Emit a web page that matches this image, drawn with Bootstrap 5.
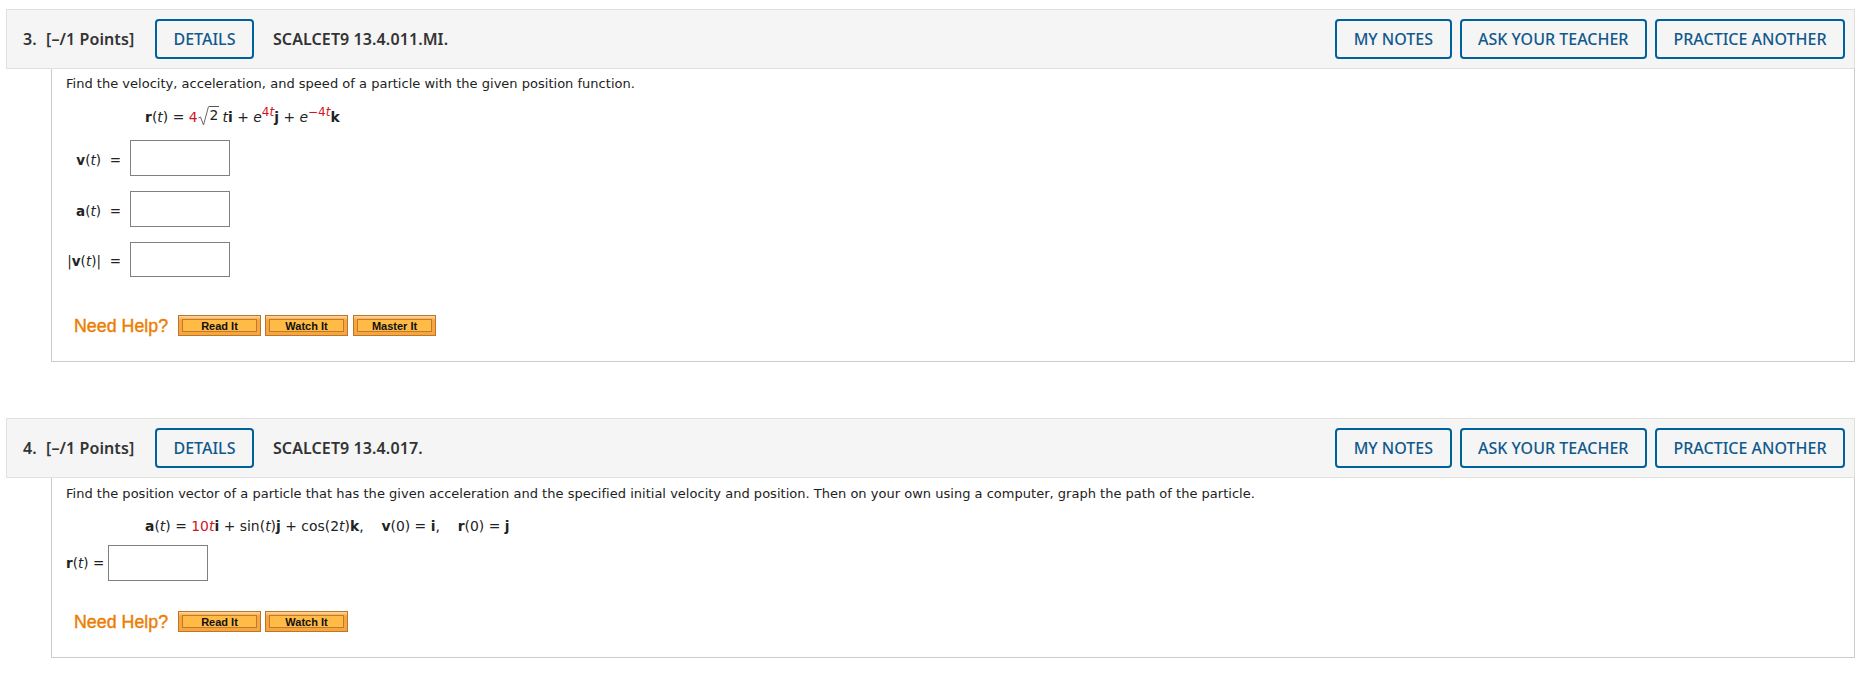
<!DOCTYPE html>
<html lang="en">

<head>
  <meta charset="UTF-8" />
  <meta name="viewport" content="width=device-width, initial-scale=1" />
  <title>SCALCET9 13.4 Assignment</title>
  <link href="https://cdn.jsdelivr.net/npm/bootstrap@5.3.3/dist/css/bootstrap.min.css" rel="stylesheet" />
  <style>
    body {
      font-family: "DejaVu Sans", sans-serif;
      font-size: 13px;
      line-height: 20px;
      letter-spacing: 0.015px;
      color: #222;
      background: #fff;
    }

    .question-wrap {
      padding: 9px 14px 0 6px;
    }

    .question-wrap + .question-wrap {
      padding-top: 56px;
    }

    .question-head {
      height: 60px;
      padding: 0 9px 0 16px;
      background: #f5f5f5;
      border: 1px solid #e0e0e0;
      font-family: "Noto Sans", sans-serif;
      font-size: 16px;
      font-weight: 600;
      letter-spacing: 0.1px;
      color: #333;
    }

    .question-num {
      width: 23px;
    }

    .question-points {
      width: 109px;
    }

    .question-code {
      margin-left: 19px;
    }

    .btn-outline-webassign {
      height: 40px;
      padding: 0 16.5px;
      font-size: 16px;
      font-weight: 500;
      line-height: 36px;
      letter-spacing: 0;
      color: #11598c;
      background: transparent;
      border: 2px solid #00619b;
      border-radius: 4px;
    }

    .question-body {
      margin-left: 45px;
      padding: 5px 14px 25px 14px;
      border: 1px solid #ccc;
      border-top: 0;
    }

    .question-body.lower {
      padding-top: 6px;
    }

    .equation {
      height: 20px;
      margin-top: 12px;
      padding-left: 79px;
      font-size: 13.9px;
      white-space: nowrap;
    }

    .equation sup {
      font-size: 12px;
      top: -6px;
      line-height: 0;
    }

    .num-red {
      color: #d3121e;
    }

    .radical {
      display: inline-flex;
      align-items: flex-start;
      vertical-align: -4px;
      margin: 0 3px 0 0;
    }

    .radicand {
      border-top: 1px solid #555;
      padding: 0 1px;
      line-height: 17px;
    }

    .answer-rows {
      margin-top: 14px;
      gap: 15px;
    }

    .answer-label {
      width: 64px;
      padding-top: 3px;
      padding-right: 9px;
      font-size: 13.5px;
      white-space: nowrap;
    }

    .answer-short {
      font-size: 13.5px;
      margin-right: 4px;
    }

    .answer-box {
      width: 100px;
      height: 36px;
      border: 1px solid #808080;
      background: #fff;
    }

    .answer-box.last {
      height: 35px;
    }

    .answer-rows.single {
      margin-top: 9px;
    }

    .need-help {
      margin-top: 38px;
      padding-left: 8px;
      gap: 4px;
    }

    .need-help.near {
      margin-top: 30px;
    }

    .need-help-title {
      width: 100px;
      font-family: "Liberation Sans", sans-serif;
      font-size: 17.8px;
      font-weight: 400;
      color: #ec7d00;
      -webkit-text-stroke: 0.4px #ec7d00;
    }

    .help-btn {
      width: 83px;
      height: 21px;
      padding: 3px;
      background: linear-gradient(#ffd9a0 0, #f9a53e 4px, #f9a53e 100%);
      border: 1px solid #b8772e;
      border-radius: 0;
      font-family: "Liberation Sans", sans-serif;
      font-size: 11px;
      font-weight: 700;
      line-height: 13px;
      color: #111;
    }

    .help-btn span {
      display: block;
      height: 13px;
      background: #ffbb45;
      border: 1px solid #bd7a30;
    }

    .help-btn.wide {
      margin-left: 1px;
    }
  </style>
</head>

<body>

  <!-- Question 3 -->
  <section class="question-wrap">
    <div class="question-head d-flex align-items-center">
      <span class="question-num">3.</span>
      <span class="question-points">[&ndash;/1 Points]</span>
      <button type="button" class="btn btn-outline-webassign">DETAILS</button>
      <span class="question-code">SCALCET9 13.4.011.MI.</span>
      <div class="d-flex ms-auto gap-2">
        <button type="button" class="btn btn-outline-webassign">MY NOTES</button>
        <button type="button" class="btn btn-outline-webassign">ASK YOUR TEACHER</button>
        <button type="button" class="btn btn-outline-webassign">PRACTICE ANOTHER</button>
      </div>
    </div>
    <div class="question-body">
      <div>Find the velocity, acceleration, and speed of a particle with the given position function.</div>
      <div class="equation">
        <b>r</b>(<i>t</i>) = <span class="num-red">4</span><span class="radical"><svg width="11" height="20" viewBox="0 0 11 20"><path d="M0.5 12 L2.5 11 L5.5 19 L10.5 0.5" fill="none" stroke="#666" stroke-width="1" /></svg><span class="radicand">2</span></span><i>t</i><b>i</b> + <i>e</i><sup class="num-red">4<i>t</i></sup><b>j</b> + <i>e</i><sup class="num-red">&minus;4<i>t</i></sup><b>k</b>
      </div>
      <div class="answer-rows d-flex flex-column">
        <div class="d-flex align-items-center">
          <span class="answer-label text-end"><b>v</b>(<i>t</i>) &nbsp;=</span>
          <input type="text" class="answer-box" />
        </div>
        <div class="d-flex align-items-center">
          <span class="answer-label text-end"><b>a</b>(<i>t</i>) &nbsp;=</span>
          <input type="text" class="answer-box" />
        </div>
        <div class="d-flex align-items-center">
          <span class="answer-label text-end">|<b>v</b>(<i>t</i>)| &nbsp;=</span>
          <input type="text" class="answer-box last" />
        </div>
      </div>
      <div class="need-help d-flex align-items-center">
        <span class="need-help-title">Need Help?</span>
        <button type="button" class="btn help-btn"><span>Read It</span></button>
        <button type="button" class="btn help-btn"><span>Watch It</span></button>
        <button type="button" class="btn help-btn wide"><span>Master It</span></button>
      </div>
    </div>
  </section>

  <!-- Question 4 -->
  <section class="question-wrap">
    <div class="question-head d-flex align-items-center">
      <span class="question-num">4.</span>
      <span class="question-points">[&ndash;/1 Points]</span>
      <button type="button" class="btn btn-outline-webassign">DETAILS</button>
      <span class="question-code">SCALCET9 13.4.017.</span>
      <div class="d-flex ms-auto gap-2">
        <button type="button" class="btn btn-outline-webassign">MY NOTES</button>
        <button type="button" class="btn btn-outline-webassign">ASK YOUR TEACHER</button>
        <button type="button" class="btn btn-outline-webassign">PRACTICE ANOTHER</button>
      </div>
    </div>
    <div class="question-body lower">
      <div>Find the position vector of a particle that has the given acceleration and the specified initial velocity and position. Then on your own using a computer, graph the path of the particle.</div>
      <div class="equation">
        <b>a</b>(<i>t</i>) = <span class="num-red">10<i>t</i></span><b>i</b> + sin(<i>t</i>)<b>j</b> + cos(2<i>t</i>)<b>k</b>, &nbsp; &nbsp;<b>v</b>(0) = <b>i</b>, &nbsp; &nbsp;<b>r</b>(0) = <b>j</b>
      </div>
      <div class="answer-rows single d-flex">
        <div class="d-flex align-items-center">
          <span class="answer-short"><b>r</b>(<i>t</i>) = </span>
          <input type="text" class="answer-box" />
        </div>
      </div>
      <div class="need-help near d-flex align-items-center">
        <span class="need-help-title">Need Help?</span>
        <button type="button" class="btn help-btn"><span>Read It</span></button>
        <button type="button" class="btn help-btn"><span>Watch It</span></button>
      </div>
    </div>
  </section>

  <script src="https://cdn.jsdelivr.net/npm/bootstrap@5.3.3/dist/js/bootstrap.bundle.min.js"></script>
</body>

</html>
